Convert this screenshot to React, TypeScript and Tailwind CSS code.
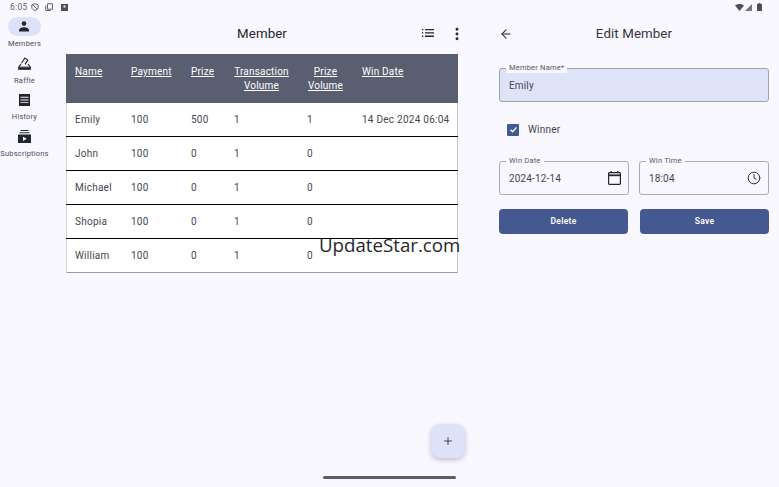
import { ArrowLeft, Clock, MoreVertical, Plus } from "lucide-react";

const members = [
  { name: "Emily", payment: "100", prize: "500", tx: "1", vol: "1", date: "14 Dec 2024 06:04" },
  { name: "John", payment: "100", prize: "0", tx: "1", vol: "0", date: "" },
  { name: "Michael", payment: "100", prize: "0", tx: "1", vol: "0", date: "" },
  { name: "Shopia", payment: "100", prize: "0", tx: "1", vol: "0", date: "" },
  { name: "William", payment: "100", prize: "0", tx: "1", vol: "0", date: "" },
];

const gridCols = "grid grid-cols-[56px_60px_43px_73px_55px_1fr]";

function MembersIcon() {
  return (
    <svg width="10" height="11" viewBox="0 0 10 11" fill="#23252f">
      <circle cx="5" cy="2.600" r="2.300" />
      <path d="M0 10.500V9C0 7.400 2.800 6.300 5 6.300S10 7.400 10 9v1.500z" />
    </svg>
  );
}

function RaffleIcon() {
  return (
    <svg width="13" height="13" viewBox="0 0 13 13" fill="none" stroke="#23252f" strokeWidth="1.100">
      <path d="M3.500 6.300 6.800 1l3 2.100-2.700 4.300" />
      <path d="M3 7.200.7 10v2.300h11.600V10L10 7.200" />
      <path d="M1 10.200h11" />
      <path d="M1 11.500h11" strokeWidth="1.800" />
    </svg>
  );
}

function HistoryIcon() {
  return (
    <svg width="11" height="12" viewBox="0 0 11 12" fill="#23252f">
      <path d="M0 0h11v12H0z" />
      <path d="M1.500 2.800h8v.9h-8zM1.500 5.500h8v.9h-8zM1.500 8.200h8v.9h-8z" fill="#f9f8ff" />
    </svg>
  );
}

function SubscriptionsIcon() {
  return (
    <svg width="13" height="13" viewBox="0 0 13 13" fill="#23252f">
      <path d="M2.500 0h8v1h-8zM1.500 2.300h10v1h-10zM0 4.600h13V13H0z" />
      <path d="M5 6.700v4.200l3.700-2.100z" fill="#f9f8ff" />
    </svg>
  );
}

function ListIcon() {
  return (
    <svg width="12" height="8" viewBox="0 0 12 8" fill="#23252f">
      <path d="M0 0h1.300v1.300H0zM0 3.300h1.300v1.300H0zM0 6.600h1.300v1.300H0z" />
      <path d="M3 0h9v1.300H3zM3 3.300h9v1.300H3zM3 6.600h9v1.300H3z" />
    </svg>
  );
}

function CalendarIcon() {
  return (
    <svg width="13" height="14" viewBox="0 0 13 14" fill="none" stroke="#23252f" strokeWidth="1.200">
      <rect x="0.600" y="1.600" width="11.800" height="11.800" rx="0.800" />
      <path d="M.6 4.300h11.800" strokeWidth="1.800" />
      <path d="M3.200 0v2M9.800 0v2" />
    </svg>
  );
}

function NavItem({ label, icon, active }: { label: string; icon: React.ReactNode; active?: boolean }) {
  return (
    <div className="flex h-[32px] flex-col items-center">
      <div className={`flex h-[19px] w-[33px] shrink-0 items-center justify-center rounded-full ${active ? "bg-[#dde1f9]" : ""}`}>
        {icon}
      </div>
      <span className="mt-[2px] whitespace-nowrap text-[7.500px] leading-[12px] tracking-[0.2px] text-[#4a4d58]">{label}</span>
    </div>
  );
}

function OutlinedField({ label, value, icon }: { label: string; value: string; icon: React.ReactNode }) {
  return (
    <div className="relative flex h-[34px] flex-1 items-center justify-between rounded-[3px] border border-[#a9aab3] pl-[9px] pr-[7px]">
      <span className="absolute left-[6px] top-[-6px] bg-[#f9f8ff] px-[3px] text-[7.500px] leading-[10px] tracking-[0.2px] text-[#55575f]">
        {label}
      </span>
      <span className="text-[10px] tracking-[0.15px] text-[#43454e]">{value}</span>
      {icon}
    </div>
  );
}

export default function App() {
  return (
    <div className="relative flex h-[487px] w-[779px] flex-col overflow-hidden bg-[#f9f8ff] font-['Roboto',sans-serif] text-[#23252f]">
      {/* status bar */}
      <div className="flex h-[14px] shrink-0 items-center justify-between pl-[10px] pr-[17px]">
        <div className="flex items-center gap-[3px] text-[#63656d]">
          <span className="text-[8.500px] tracking-[0.3px]">6:05</span>
          <svg width="8" height="8" viewBox="0 0 8 8" fill="none" stroke="#63656d" strokeWidth="1">
            <path d="M4 .7 7.200 2v2.200C7.200 6 5.600 7 4 7.500 2.400 7 .8 6 .8 4.200V2zM1.500 1.500l5 5" />
          </svg>
          <svg className="ml-[3px]" width="8" height="8" viewBox="0 0 8 8" fill="none" stroke="#63656d" strokeWidth="1">
            <path d="M2.500.8h5v5.400h-5zM.7 2.500v5h5" />
          </svg>
          <svg className="ml-[5px]" width="7" height="7" viewBox="0 0 7 7" fill="#4d4f58">
            <path d="M0 0h7v7H0z" />
            <path d="M2.500 1.500h2v2h-2z" fill="#f9f8ff" />
          </svg>
        </div>
        <div className="flex items-center">
          <svg width="9" height="7" viewBox="0 0 9 7" fill="#4d4f58">
            <path d="M0 1.500C2.600-.5 6.400-.5 9 1.500L4.500 7z" />
          </svg>
          <svg className="ml-[1px]" width="7" height="7" viewBox="0 0 7 7" fill="#73757d">
            <path d="M7 0v7H0z" />
          </svg>
          <svg className="ml-[5px]" width="5" height="8" viewBox="0 0 5 8" fill="#4d4f58">
            <path d="M1.500 0h2v1H5v7H0V1h1.500z" />
          </svg>
        </div>
      </div>

      <div className="flex min-h-0 flex-1">
        {/* nav rail */}
        <nav className="flex w-[49px] shrink-0 flex-col items-center gap-[4.500px] pt-[3px]">
          <NavItem label="Members" icon={<MembersIcon />} active />
          <NavItem label="Raffle" icon={<RaffleIcon />} />
          <NavItem label="History" icon={<HistoryIcon />} />
          <NavItem label="Subscriptions" icon={<SubscriptionsIcon />} />
        </nav>

        {/* member list */}
        <main className="ml-[17px] w-[392px] shrink-0">
          <header className="relative flex h-[40px] items-center justify-center">
            <h1 className="text-[13.300px] tracking-[0.1px]">Member</h1>
            <span className="absolute right-[24px] top-[15px] flex">
              <ListIcon />
            </span>
            <MoreVertical className="absolute right-[-7px] top-[12px]" size={16} strokeWidth={2.400} />
          </header>

          <div className="border-b border-l border-r border-b-[#9b9ca3] border-l-[#d5d5db] border-r-[#c8c8cf] bg-white">
            <div className={`${gridCols} -mx-px h-[49px] bg-[#5a5e71] pt-[11px] text-[10px] leading-[14px] tracking-[0.2px] text-white`}>
              <span className="pl-[9px] underline">Name</span>
              <span className="pl-[9px] underline">Payment</span>
              <span className="pl-[9px] underline">Prize</span>
              <span className="px-[9px] text-center underline">Transaction Volume</span>
              <span className="px-[9px] text-center underline">Prize Volume</span>
              <span className="pl-[9px] underline">Win Date</span>
            </div>
            {members.map((m, i) => (
              <div
                key={m.name}
                className={`${gridCols} -mx-px items-center text-[10px] tracking-[0.25px] text-[#45474f] ${i < members.length - 1 ? "h-[34px] border-b border-black" : "h-[33px]"}`}
              >
                <span className="pl-[9px]">{m.name}</span>
                <span className="pl-[9px]">{m.payment}</span>
                <span className="pl-[9px]">{m.prize}</span>
                <span className="pl-[9px]">{m.tx}</span>
                <span className="pl-[9px]">{m.vol}</span>
                <span className="whitespace-nowrap pl-[9px]">{m.date}</span>
              </div>
            ))}
          </div>
        </main>

        {/* edit pane */}
        <aside className="ml-[41px] flex w-[270px] shrink-0 flex-col">
          <header className="relative flex h-[40px] items-center justify-center">
            <ArrowLeft className="absolute left-[0px] top-[13px]" size={14} strokeWidth={1.800} />
            <h2 className="text-[13.300px] tracking-[0.1px] text-[#33353e]">Edit Member</h2>
          </header>

          <div className="relative mt-[14px] flex h-[34px] items-center rounded-[3px] border border-[#a0a2ad] bg-[#dfe3f8] pl-[9px]">
            <span className="absolute left-[6px] top-[-6px] rounded-t-[2px] bg-[#f9f8ff] px-[3px] text-[7.500px] leading-[10px] tracking-[0.2px] text-[#55575f]">
              Member Name*
            </span>
            <span className="text-[10px] tracking-[0.15px] text-[#43454e]">Emily</span>
          </div>

          <div className="mt-[20px] flex items-center pl-[8px]">
            <span className="flex h-[12px] w-[12px] items-center justify-center rounded-[1px] bg-[#3f5a92]">
              <svg width="9" height="9" viewBox="0 0 9 9" fill="none" stroke="white" strokeWidth="1.400">
                <path d="M1.500 4.700 3.600 6.700 7.500 2.400" />
              </svg>
            </span>
            <span className="ml-[9px] text-[10px] tracking-[0.2px] text-[#43454e]">Winner</span>
          </div>

          <div className="mt-[24px] flex gap-[10px]">
            <OutlinedField label="Win Date" value="2024-12-14" icon={<CalendarIcon />} />
            <OutlinedField label="Win Time" value="18:04" icon={<Clock size={14} strokeWidth={1.600} />} />
          </div>

          <div className="mt-[14px] flex gap-[12px]">
            <button type="button" className="h-[25px] flex-1 rounded-[4px] bg-[#43598f] text-[8.500px] font-semibold tracking-[0.3px] text-white">
              Delete
            </button>
            <button type="button" className="h-[25px] flex-1 rounded-[4px] bg-[#43598f] text-[8.500px] font-semibold tracking-[0.3px] text-white">
              Save
            </button>
          </div>
        </aside>
      </div>

      {/* watermark */}
      <span className="absolute left-[319px] top-[232px] font-['Open_Sans',sans-serif] text-[18.700px] leading-[26px] text-[#26282e]">UpdateStar.com</span>

      {/* add button */}
      <button
        type="button"
        className="absolute left-[431px] top-[424px] flex h-[34px] w-[34px] items-center justify-center rounded-[9px] bg-[#dde1f9] shadow-[0_2px_5px_rgba(60,60,90,0.3)]"
      >
        <Plus size={12} strokeWidth={1.600} className="text-[#23252f]" />
      </button>

      {/* gesture bar */}
      <div className="absolute left-[323px] top-[476px] h-[2.500px] w-[133px] rounded-full bg-[#5d5e63]" />
    </div>
  );
}
